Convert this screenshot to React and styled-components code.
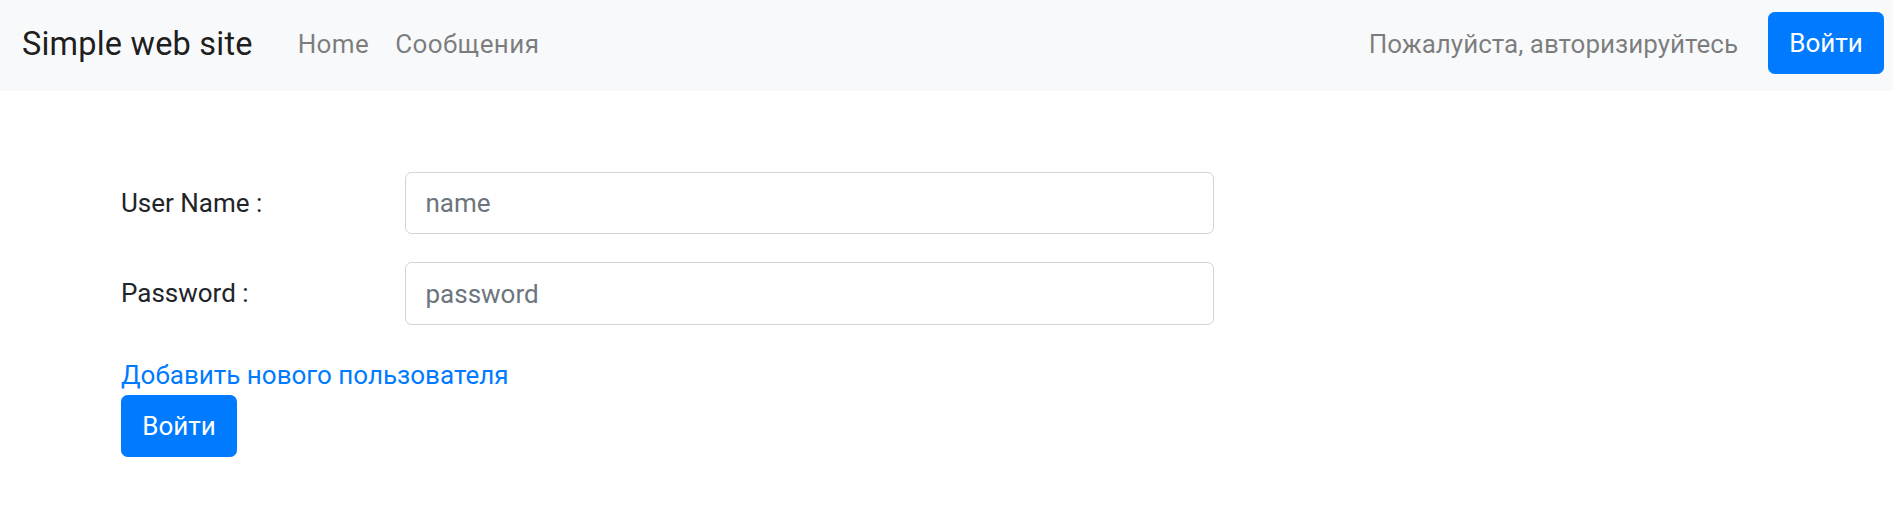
import React from 'react'
import styled, { createGlobalStyle } from 'styled-components'

const GlobalStyle = createGlobalStyle`
body {
    margin: 0;
    font-family: Roboto, "Noto Sans", sans-serif;
    font-size: 26px;
    line-height: 1.5;
    color: #212529;
    background: #fff;
}
`

const Navbar = styled.nav`
display: flex;
align-items: center;
box-sizing: border-box;
height: 91px;
padding: 12px 9px 17px 22px;
background: #f8f9fa;
`
const Brand = styled.a`
padding-top: 3px;
font-size: 32.5px;
letter-spacing: 0.2px;
color: rgba(0, 0, 0, 0.9);
text-decoration: none;
margin-right: 32px;
`
const NavList = styled.ul`
display: flex;
list-style: none;
margin: 0;
padding: 3px 0 0;
`
const NavLink = styled.a`
display: block;
padding: 0 13px;
letter-spacing: 0.4px;
color: rgba(0, 0, 0, 0.5);
text-decoration: none;
`
const NavText = styled.span`
margin-left: auto;
margin-right: 30px;
padding-top: 3px;
color: rgba(0, 0, 0, 0.5);
`
const Button = styled.button`
height: 62px;
width: 116px;
padding: 0 19px;
border: 1px solid #007bff;
border-radius: 6.5px;
background: #007bff;
color: #fff;
font-family: inherit;
font-size: 26px;
line-height: 1.5;
cursor: pointer;
`

const Main = styled.main`
padding: 81px 0 0 121px;
`
const FormGrid = styled.div`
display: grid;
grid-template-columns: 284px 809px;
row-gap: 28px;
align-items: center;
`
const Label = styled.label`
color: #212529;
`
const Input = styled.input`
box-sizing: border-box;
height: ${p => p.$h}px;
width: 100%;
padding: 0 19.5px;
border: 1px solid #ced4da;
border-radius: 6.5px;
font-family: inherit;
font-size: 26px;
color: #495057;
background: #fff;

&::placeholder {
    color: #6c757d;
}
`
const AddLink = styled.a`
display: block;
width: max-content;
margin-top: 31px;
color: #007bff;
text-decoration: none;
`

const App = () => {
  return (
    <>
        <GlobalStyle />
        <Navbar>
            <Brand href="#">Simple web site</Brand>
            <NavList>
                <li><NavLink href="#">Home</NavLink></li>
                <li><NavLink href="#">Сообщения</NavLink></li>
            </NavList>
            <NavText>Пожалуйста, авторизируйтесь</NavText>
            <Button>Войти</Button>
        </Navbar>
        <Main>
            <FormGrid>
                <Label htmlFor="name">User Name :</Label>
                <Input id="name" placeholder="name" $h={62} />
                <Label htmlFor="password">Password :</Label>
                <Input id="password" type="password" placeholder="password" $h={63} />
            </FormGrid>
            <AddLink href="#">Добавить нового пользователя</AddLink>
            <Button>Войти</Button>
        </Main>
    </>
  )
}

export default App
